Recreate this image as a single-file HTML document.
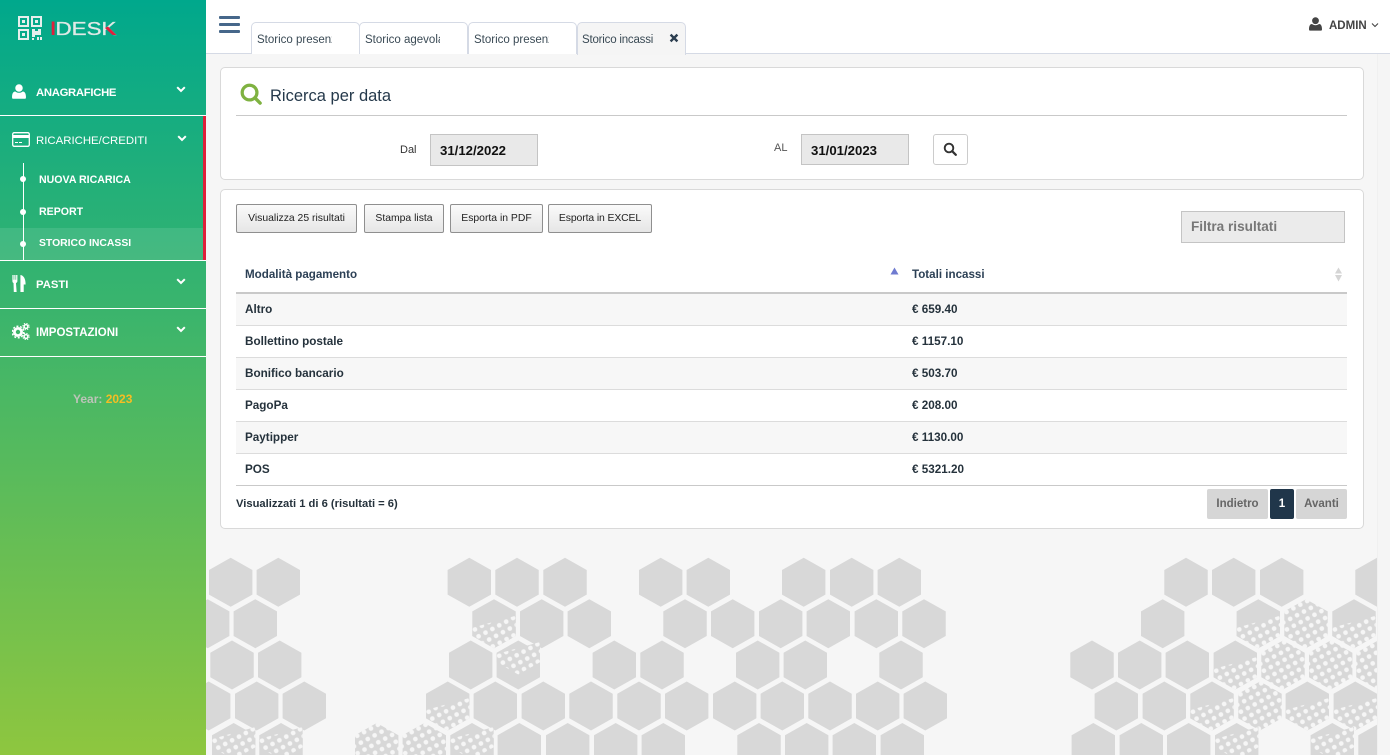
<!DOCTYPE html>
<html lang="it"><head><meta charset="utf-8"><title>Storico incassi</title>
<style>
*{box-sizing:border-box}
html,body{margin:0;padding:0;width:1390px;height:755px;overflow:hidden;background:#f6f6f6;font-family:"Liberation Sans",sans-serif;color:#222}
.a{position:absolute}
#side{left:0;top:0;width:206px;height:755px;background:linear-gradient(#00a88c 0,#8ec63f 100%)}
.m{position:absolute;color:#fff;font-size:11.3px;white-space:nowrap;font-weight:bold}
.ln{position:absolute;left:0;width:206px;height:1px;background:#fff}
.dot{position:absolute;left:20px;width:6px;height:6px;border-radius:50%;background:#fff}
.tab{position:absolute;top:22px;height:32px;background:#fff;border:1px solid #d5dae5;border-bottom:0;border-radius:5px 5px 0 0;font-size:11.5px;color:#3a4a55;line-height:35px;padding-left:5px}
.tab span{display:block;width:75px;overflow:hidden;white-space:nowrap}
.card{position:absolute;left:220px;width:1144px;background:#fff;border:1px solid #d9d9d9;border-radius:5px}
.inp{position:absolute;background:#e9e9e9;border:1px solid #c4c4c4;font-weight:bold;color:#111;font-size:13.2px;line-height:31px;padding-left:9px}
.btn{position:absolute;top:204px;height:29px;background:linear-gradient(#fafafa,#e6e6e6);border:1px solid #8f8f8f;border-radius:2px;font-size:10.4px;line-height:27px;text-align:center;color:#222;white-space:nowrap}
.th{position:absolute;font-size:11.6px;font-weight:bold;color:#2c4055;white-space:nowrap}
.row{position:absolute;left:236px;width:1111px;height:32px;border-bottom:1px solid #dcdcdc;font-size:11.7px;font-weight:bold;color:#25323c;line-height:31px}
.row.o{background:#f7f7f7}
.row b{position:absolute;left:9px;white-space:nowrap}
.row i{position:absolute;left:676px;font-style:normal;white-space:nowrap}
.pg{position:absolute;top:489px;height:30px;background:#d6d6d6;border-radius:2px;font-size:11.5px;font-weight:bold;color:#666;text-align:center;line-height:30px}
</style></head><body>

<svg class="a" style="left:206px;top:540px" width="1172" height="215" viewBox="206 540 1172 215">
<defs>
<polygon id="h" points="0,-24.5 21.7,-12.3 21.7,12.3 0,24.5 -21.7,12.3 -21.7,-12.3" fill="#d8d8d8"/>
<pattern id="dp" width="7.8" height="7.8" patternUnits="userSpaceOnUse" patternTransform="rotate(-28)">
<rect width="7.8" height="7.8" fill="#d8d8d8"/><circle cx="3.9" cy="3.9" r="2.35" fill="#f6f6f6"/>
</pattern>
<polygon id="d" points="0,-24.5 21.7,-12.3 21.7,12.3 0,24.5 -21.7,12.3 -21.7,-12.3" fill="url(#dp)"/>
<polygon id="q" points="-21.7,4 21.7,-8 21.7,12.3 0,24.5 -21.7,12.3" fill="url(#dp)"/>
</defs>
<g>
<use href="#h" x="230.7" y="582.3"/><use href="#h" x="278.3" y="582.3"/><use href="#h" x="469.3" y="582.3"/><use href="#h" x="517" y="582.3"/><use href="#h" x="565" y="582.3"/><use href="#h" x="660.7" y="582.3"/><use href="#h" x="708.3" y="582.3"/><use href="#h" x="803.7" y="582.3"/><use href="#h" x="851.7" y="582.3"/><use href="#h" x="899.3" y="582.3"/><use href="#h" x="1186" y="582.3"/><use href="#h" x="1233.7" y="582.3"/><use href="#h" x="1281.7" y="582.3"/><use href="#h" x="1377" y="582.3"/>

<use href="#h" x="207.7" y="623.7"/><use href="#h" x="255.3" y="623.7"/><use href="#h" x="494" y="623.7"/><use href="#q" x="494" y="623.7"/><use href="#h" x="541.7" y="623.7"/><use href="#h" x="589.3" y="623.7"/><use href="#h" x="685" y="623.7"/><use href="#h" x="732.7" y="623.7"/><use href="#h" x="780.7" y="623.7"/><use href="#h" x="828.3" y="623.7"/><use href="#h" x="876.3" y="623.7"/><use href="#h" x="924" y="623.7"/><use href="#h" x="1162.7" y="623.7"/><use href="#h" x="1258.3" y="623.7"/><use href="#q" x="1258.3" y="623.7"/><use href="#d" x="1306" y="623.7"/><use href="#h" x="1354" y="623.7"/><use href="#q" x="1354" y="623.7"/>

<use href="#h" x="232" y="665"/><use href="#h" x="279.7" y="665"/><use href="#h" x="470.7" y="665"/><use href="#h" x="518.3" y="665"/><use href="#q" x="518.3" y="650"/><use href="#h" x="614.3" y="665"/><use href="#h" x="662" y="665"/><use href="#h" x="757.7" y="665"/><use href="#h" x="805.3" y="665"/><use href="#h" x="901" y="665"/><use href="#h" x="1092" y="665"/><use href="#h" x="1139.7" y="665"/><use href="#h" x="1187.3" y="665"/><use href="#h" x="1235.3" y="665"/><use href="#q" x="1235.3" y="665"/><use href="#d" x="1283" y="665"/><use href="#d" x="1330.7" y="665"/><use href="#d" x="1378" y="665"/>

<use href="#h" x="208.7" y="706"/><use href="#h" x="256.7" y="706"/><use href="#h" x="304.3" y="706"/><use href="#h" x="447.7" y="706"/><use href="#q" x="447.7" y="706"/><use href="#h" x="495.3" y="706"/><use href="#h" x="543.3" y="706"/><use href="#h" x="591" y="706"/><use href="#h" x="639" y="706"/><use href="#h" x="686.7" y="706"/><use href="#h" x="734.7" y="706"/><use href="#h" x="782.3" y="706"/><use href="#h" x="830" y="706"/><use href="#h" x="877.7" y="706"/><use href="#h" x="925.3" y="706"/><use href="#h" x="1116.3" y="706"/><use href="#h" x="1164.3" y="706"/><use href="#h" x="1212" y="706"/><use href="#q" x="1212" y="706"/><use href="#d" x="1260" y="706"/><use href="#h" x="1307.3" y="706"/><use href="#q" x="1307.3" y="706"/><use href="#h" x="1355.3" y="706"/><use href="#q" x="1355.3" y="706"/>

<use href="#h" x="233.7" y="747.5"/><use href="#q" x="233.7" y="735"/><use href="#h" x="281" y="747.5"/><use href="#q" x="281" y="735"/><use href="#d" x="376.7" y="747.5"/><use href="#d" x="424.3" y="747.5"/><use href="#h" x="472" y="747.5"/><use href="#q" x="472" y="735"/><use href="#h" x="519.3" y="747.5"/><use href="#h" x="567.7" y="747.5"/><use href="#h" x="615.7" y="747.5"/><use href="#h" x="663.3" y="747.5"/><use href="#h" x="759" y="747.5"/><use href="#h" x="806.7" y="747.5"/><use href="#h" x="854.3" y="747.5"/><use href="#h" x="902.3" y="747.5"/><use href="#h" x="1093.3" y="747.5"/><use href="#h" x="1141.3" y="747.5"/><use href="#h" x="1188.7" y="747.5"/><use href="#h" x="1236.7" y="747.5"/><use href="#q" x="1236.7" y="735"/><use href="#h" x="1332.3" y="747.5"/><use href="#q" x="1332.3" y="735"/><use href="#h" x="1380" y="747.5"/>
</g>
</svg>

<!-- top bar -->
<div class="a" style="left:206px;top:0;width:1184px;height:54px;background:#fff;border-bottom:1px solid #d5dae5"></div>
<div class="a" style="left:1377px;top:54px;width:13px;height:701px;background:#f5f5f5;border-left:1px solid #f0f0f0"></div>
<div class="a" style="left:219px;top:16px;width:21px;height:3px;background:#46678a;border-radius:1px"></div>
<div class="a" style="left:219px;top:23px;width:21px;height:3px;background:#46678a;border-radius:1px"></div>
<div class="a" style="left:219px;top:30px;width:21px;height:3px;background:#46678a;border-radius:1px"></div>
<div class="tab" style="left:251px;width:109px"><span>Storico presenze</span></div>
<div class="tab" style="left:359px;width:109px"><span>Storico agevolazioni</span></div>
<div class="tab" style="left:468px;width:109px"><span>Storico presenze</span></div>
<div class="tab" style="left:577px;width:109px;background:#f5f5f5;height:33px"><span style="letter-spacing:-.2px;margin-left:-1px">Storico incassi</span></div>
<svg class="a" style="left:669px;top:33px" width="10" height="10" viewBox="0 0 10 10"><path d="M1.600 1.600 8.400 8.400M8.400 1.600 1.600 8.400" stroke="#2c3e50" stroke-width="2.400"/></svg>
<svg class="a" style="left:1309px;top:17px" width="13" height="14" viewBox="0 0 13 14"><circle cx="6.500" cy="3.700" r="3.400" fill="#444"/><path d="M1 13.600C.2 13.600 0 13 0 12.200 0 9.500.8 7 3 7c1 .8 2.200 1.200 3.500 1.200S9 7.800 10 7c2.200 0 3 2.500 3 5.200 0 .8-.2 1.400-1 1.400z" fill="#444"/></svg>
<div class="a" style="left:1329px;top:20px;font-size:11.5px;font-weight:bold;color:#444;white-space:nowrap">ADMIN</div>
<svg class="a" style="left:1371px;top:22px" width="8" height="6" viewBox="0 0 8 6"><path d="M1 1.500 4 4.500 7 1.500" fill="none" stroke="#444" stroke-width="1.100"/></svg>

<!-- sidebar -->
<div class="a" id="side">
<svg class="a" style="left:18px;top:16px" width="24" height="24" viewBox="0 0 24 24">
<g fill="none" stroke="#e6efec" stroke-width="2"><rect x="1" y="1" width="9" height="9"/><rect x="14" y="1" width="9" height="9"/><rect x="1" y="14" width="9" height="9"/></g>
<g fill="#e6efec"><rect x="4" y="4" width="3" height="3"/><rect x="17" y="4" width="3" height="3"/><rect x="4" y="17" width="3" height="3"/><path d="M14 13h3v2h3v-2h3v6h-6v2h-3zM14 22h2v2h-2zM19 21h2v3h-2zM22 21h2v3h-2z"/></g>
</svg>
<svg class="a" style="left:50px;top:18px" width="70" height="22" viewBox="0 0 70 22">
<rect x="1.700" y="3.500" width="2.800" height="13.500" fill="#e01f3d"/>
<text x="5.500" y="17" font-family="Liberation Sans" font-size="18.500" fill="#dfe9e6" stroke="#dfe9e6" stroke-width=".3" textLength="61" lengthAdjust="spacingAndGlyphs">DESK</text>
<path d="M55 10l7.500 7h4l-8.500-8.500z" fill="#e01f3d"/>
</svg>

<svg class="a" style="left:12px;top:84px" width="14" height="15" viewBox="0 0 13 14"><circle cx="6.500" cy="3.700" r="3.500" fill="#fff"/><path d="M1 13.800C.2 13.800 0 13 0 12.200 0 9.500.8 7 3 7c1 .8 2.200 1.200 3.500 1.200S9 7.800 10 7c2.200 0 3 2.500 3 5.200 0 .8-.2 1.600-1 1.600z" fill="#fff"/></svg>
<div class="m" style="left:36px;top:87px;letter-spacing:-.3px">ANAGRAFICHE</div>
<svg class="a" style="left:176px;top:86px" width="10" height="7" viewBox="0 0 10 7"><path d="M1.200 1.200 5 5 8.800 1.200" fill="none" stroke="#fff" stroke-width="2"/></svg>
<div class="ln" style="top:115px"></div>

<div class="a" style="left:203px;top:116px;width:3px;height:144px;background:#df1f3a"></div>
<svg class="a" style="left:12px;top:132px" width="18" height="15" viewBox="0 0 18 15"><rect x=".7" y=".7" width="16.600" height="13.600" rx="1.500" fill="none" stroke="#fff" stroke-width="1.300"/><rect x="1" y="3" width="16" height="3" fill="#fff"/><rect x="3" y="10" width="3" height="1" fill="#fff"/><rect x="7" y="10" width="3" height="1" fill="#fff"/></svg>
<div class="m" style="left:36px;top:135px;font-weight:normal;font-size:11.4px">RICARICHE/CREDITI</div>
<svg class="a" style="left:177px;top:135px" width="10" height="7" viewBox="0 0 10 7"><path d="M1.200 1.200 5 5 8.800 1.200" fill="none" stroke="#fff" stroke-width="2"/></svg>
<div class="a" style="left:0;top:228px;width:203px;height:32px;background:rgba(255,255,255,.1)"></div>
<div class="a" style="left:23px;top:163px;width:1px;height:97px;background:#fff"></div>
<div class="dot" style="top:176px"></div><div class="dot" style="top:209px"></div><div class="dot" style="top:241px"></div>
<div class="m" style="left:39px;top:174px;font-size:10.6px">NUOVA RICARICA</div>
<div class="m" style="left:39px;top:206px;font-size:10.6px">REPORT</div>
<div class="m" style="left:39px;top:238px;font-size:10.4px">STORICO INCASSI</div>
<div class="ln" style="top:260px"></div>

<svg class="a" style="left:12px;top:275px" width="14" height="17" viewBox="0 0 14 18"><path d="M0 0h1.300v5h.7V0h1.300v5h.7V0h1.300v6.500c0 1-.7 1.800-1.500 2L4.500 18H1.500L1.200 8.500C.5 8.300 0 7.500 0 6.500zM8.500 18V0c3.500.5 5.500 4 5.500 10h-2v8z" fill="#fff"/></svg>
<div class="m" style="left:36px;top:279px">PASTI</div>
<svg class="a" style="left:176px;top:278px" width="10" height="7" viewBox="0 0 10 7"><path d="M1.200 1.200 5 5 8.800 1.200" fill="none" stroke="#fff" stroke-width="2"/></svg>
<div class="ln" style="top:308px"></div>

<svg class="a" style="left:12px;top:323px" width="18" height="17" viewBox="0 0 18 17">
<circle cx="6" cy="9" r="3.600" fill="none" stroke="#fff" stroke-width="2.800"/><circle cx="6" cy="9" r="5.800" fill="none" stroke="#fff" stroke-width="1.500" stroke-dasharray="2 1.650"/>
<circle cx="14" cy="3.500" r="1.900" fill="none" stroke="#fff" stroke-width="1.500"/><circle cx="14" cy="3.500" r="3.200" fill="none" stroke="#fff" stroke-width="1" stroke-dasharray="1.300 1.200"/>
<circle cx="14" cy="13.500" r="1.900" fill="none" stroke="#fff" stroke-width="1.500"/><circle cx="14" cy="13.500" r="3.200" fill="none" stroke="#fff" stroke-width="1" stroke-dasharray="1.300 1.200"/>
</svg>
<div class="m" style="left:36px;top:327px;font-size:11.5px">IMPOSTAZIONI</div>
<svg class="a" style="left:176px;top:326px" width="10" height="7" viewBox="0 0 10 7"><path d="M1.200 1.200 5 5 8.800 1.200" fill="none" stroke="#fff" stroke-width="2"/></svg>
<div class="ln" style="top:356px"></div>
<div class="m" style="left:73px;top:392px;color:#bcc4b8;font-size:12px">Year: <span style="color:#f6bd23">2023</span></div>
</div>

<!-- card 1 -->
<div class="card" style="top:67px;height:113px"></div>
<svg class="a" style="left:240px;top:83px" width="22" height="22" viewBox="0 0 23 23"><circle cx="10" cy="10" r="7.700" fill="none" stroke="#7fb241" stroke-width="3.400"/><path d="M15.500 15.500 21 21" stroke="#7fb241" stroke-width="3.600" stroke-linecap="round"/></svg>
<div class="a" style="left:270px;top:87px;font-size:16.500px;color:#25394b;white-space:nowrap">Ricerca per data</div>
<div class="a" style="left:236px;top:115px;width:1111px;height:1px;background:#c9c9c9"></div>
<div class="a" style="left:400px;top:144px;font-size:11px;color:#333">Dal</div>
<div class="inp" style="left:430px;top:134px;width:108px;height:32px;line-height:32px">31/12/2022</div>
<div class="a" style="left:774px;top:142px;font-size:11px;color:#555">AL</div>
<div class="inp" style="left:801px;top:134px;width:108px;height:31px;line-height:31px">31/01/2023</div>
<div class="a" style="left:933px;top:134px;width:35px;height:31px;border:1px solid #ccc;border-radius:3px;background:#fff"></div>
<svg class="a" style="left:943px;top:142px" width="14" height="14" viewBox="0 0 14 14"><circle cx="6" cy="6" r="4.300" fill="none" stroke="#333" stroke-width="1.900"/><path d="M9.200 9.200 12.800 12.800" stroke="#333" stroke-width="2.200" stroke-linecap="round"/></svg>

<!-- card 2 -->
<div class="card" style="top:189px;height:340px"></div>
<div class="btn" style="left:236px;width:121px">Visualizza 25 risultati</div>
<div class="btn" style="left:364px;width:80px">Stampa lista</div>
<div class="btn" style="left:450px;width:93px">Esporta in PDF</div>
<div class="btn" style="left:548px;width:104px;letter-spacing:-.1px">Esporta in EXCEL</div>
<div class="a" style="left:1181px;top:211px;width:164px;height:32px;background:#ebebeb;border:1px solid #c4c4c4;font-size:13.600px;font-weight:bold;color:#777;line-height:29px;padding-left:9px">Filtra risultati</div>

<div class="th" style="left:245px;top:268px">Modalità pagamento</div>
<div class="th" style="left:912px;top:268px">Totali incassi</div>
<svg class="a" style="left:890px;top:267px" width="9" height="8" viewBox="0 0 9 8"><path d="M4.500 .5 8.500 7.500H.5z" fill="#6f7bd0"/></svg>
<svg class="a" style="left:1334px;top:267px" width="9" height="15" viewBox="0 0 9 15"><path d="M4.500 .5 8 6.500H1zM4.500 14.500 8 8H1z" fill="#d5d5d5"/></svg>
<div class="a" style="left:236px;top:292px;width:1111px;height:2px;background:#c9c9c9"></div>
<div class="row o" style="top:294px"><b>Altro</b><i>€ 659.40</i></div>
<div class="row" style="top:326px"><b>Bollettino postale</b><i>€ 1157.10</i></div>
<div class="row o" style="top:358px"><b>Bonifico bancario</b><i>€ 503.70</i></div>
<div class="row" style="top:390px"><b>PagoPa</b><i>€ 208.00</i></div>
<div class="row o" style="top:422px"><b>Paytipper</b><i>€ 1130.00</i></div>
<div class="row" style="top:454px;border-color:#c9c9c9"><b>POS</b><i>€ 5321.20</i></div>
<div class="a" style="left:236px;top:498px;font-size:11.200px;font-weight:bold;color:#25323c;white-space:nowrap">Visualizzati 1 di 6 (risultati = 6)</div>
<div class="pg" style="left:1207px;width:61px">Indietro</div>
<div class="pg" style="left:1270px;width:24px;background:#20364a;color:#fff">1</div>
<div class="pg" style="left:1296px;width:51px">Avanti</div>
</body></html>
